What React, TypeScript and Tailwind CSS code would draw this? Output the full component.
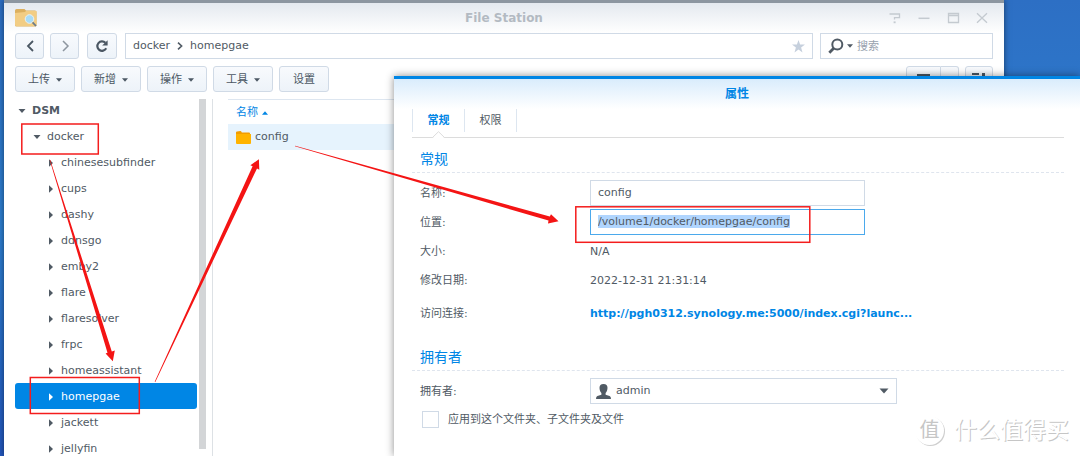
import { useEffect, useRef } from 'react'

const menus = ['上传', '新增', '操作', '工具']

const folders = [
  'chinesesubfinder',
  'cups',
  'dashy',
  'ddnsgo',
  'emby2',
  'flare',
  'flaresolver',
  'frpc',
  'homeassistant',
  'homepgae',
  'jackett',
  'jellyfin',
]

const btn = 'h-[26px] flex items-center justify-center border border-[#d0dae6] rounded-[3px] bg-linear-to-b from-[#f8fafd] to-[#edf3f9] text-[#4b5763]'

function Caret({ className = '' }: { className?: string }) {
  return (
    <svg className={`shrink-0 ${className}`} width="6" height="4" viewBox="0 0 6 4" fill="currentColor">
      <path d="M0 0.3h6L3 3.7z" />
    </svg>
  )
}

function TreeArrow({ open }: { open?: boolean }) {
  return (
    <svg className="shrink-0" width="8" height="8" viewBox="0 0 8 8" fill="currentColor">
      <path d={open ? 'M0.5 2h7L4 6z' : 'M2 0.2v7.6L6 4z'} />
    </svg>
  )
}

function AppIcon() {
  return (
    <svg width="22" height="18" viewBox="0 0 22 18">
      <path d="M0 1.5Q0 0 1.5 0h8L11 1.5h9q1.5 0 1.5 1.5v13q0 1.500-1.500 1.500h-18.500Q0 17.500 0 16z" fill="#dcb05f" />
      <path d="M0 4l10-1 1-1h10.500v13.500q0 1.500-1.500 1.500H1.500Q0 17 0 15.500z" fill="#f2cd84" />
      <circle cx="14.500" cy="10" r="4.300" fill="#a9dcf7" stroke="#e9f2f5" />
      <path d="M17.600 13.300l3.400 3.700" stroke="#6b7c89" strokeWidth="1.800" />
    </svg>
  )
}

function TitleBar() {
  return (
    <header className="relative h-[30px] flex items-center justify-between pl-[11px] pr-[14px] bg-linear-to-b from-[#e4e9ef] to-white">
      <div>
        <AppIcon />
      </div>
      <h1 className="absolute inset-x-0 text-center text-[12px] font-bold text-[#b3bac2] pointer-events-none">File Station</h1>
      <div className="flex gap-[13px] text-[#c4cad0]">
        <button type="button" aria-label="帮助">
          <svg width="16" height="12" viewBox="0 0 16 12" fill="none" stroke="currentColor" strokeWidth="1.3">
            <path d="M2.500 2h10v3.600H7.500v2" />
            <path d="M6.600 10.300h2" strokeWidth="1.800" />
          </svg>
        </button>
        <button type="button" aria-label="最小化">
          <svg width="16" height="12" viewBox="0 0 16 12" stroke="currentColor" strokeWidth="1.500">
            <path d="M2.500 6.300h11" />
          </svg>
        </button>
        <button type="button" aria-label="最大化">
          <svg width="16" height="12" viewBox="0 0 16 12" fill="none" stroke="currentColor">
            <path d="M3.500 1.500h10v9h-10zM3.500 3.500h10" strokeWidth="1.300" />
          </svg>
        </button>
        <button type="button" aria-label="关闭">
          <svg width="16" height="12" viewBox="0 0 16 12" stroke="currentColor" strokeWidth="1.300">
            <path d="M3 1.200l10 9.600M13 1.200L3 10.800" />
          </svg>
        </button>
      </div>
    </header>
  )
}

function NavRow() {
  return (
    <div className="flex px-[11px]">
      <button type="button" aria-label="后退" className={`${btn} w-[29px]`}>
        <svg width="10" height="12" viewBox="0 0 10 12" fill="none" stroke="currentColor" strokeWidth="1.8">
          <path d="M8 1L3 6l5 5" />
        </svg>
      </button>
      <button type="button" aria-label="前进" className={`${btn} w-[29px] ml-1.5`}>
        <svg className="opacity-60" width="10" height="12" viewBox="0 0 10 12" fill="none" stroke="currentColor" strokeWidth="1.5">
          <path d="M3 1l5 5-5 5" />
        </svg>
      </button>
      <button type="button" aria-label="刷新" className={`${btn} w-[30px] ml-2`}>
        <svg width="14" height="14" viewBox="0 0 14 14">
          <path d="M11.200 9.300A4.700 4.700 0 1 1 10.400 3.800" fill="none" stroke="currentColor" strokeWidth="2.200" />
          <path d="M12.600 1.200v5.400H7.200z" fill="currentColor" />
        </svg>
      </button>
      <nav className="flex-1 ml-2 h-[26px] flex items-center gap-[7px] border border-[#d0dae6] px-[7px] bg-white">
        <a href="#docker">docker</a>
        <svg width="6" height="8" viewBox="0 0 6 8" fill="none" stroke="currentColor" strokeWidth="1.6">
          <path d="M1 0.700L4.600 4 1 7.300" />
        </svg>
        <a href="#homepgae">homepgae</a>
        <button type="button" aria-label="收藏" className="ml-auto text-[#c6d0dd]">
          <svg width="13" height="13" viewBox="0 0 13 13" fill="currentColor">
            <path d="M6.500 0l1.600 4.600H13L9.100 7.600l1.400 4.900-4-2.900-4 2.900 1.400-4.900L0 4.600h4.900z" />
          </svg>
        </button>
      </nav>
      <label className="w-[173px] ml-[7px] h-[26px] flex items-center border border-[#d0dae6] px-[7px] bg-white">
        <svg width="16" height="16" viewBox="0 0 16 16" fill="none" stroke="currentColor">
          <circle cx="9.300" cy="6.500" r="5" strokeWidth="2" />
          <path d="M5.700 10.300L1.300 14.700" strokeWidth="2.800" />
        </svg>
        <Caret className="ml-[3px]" />
        <input type="search" aria-label="搜索" placeholder="搜索" className="flex-1 min-w-0 ml-1 pt-px outline-none placeholder:text-[#98a2ae]" />
      </label>
    </div>
  )
}

function Toolbar() {
  return (
    <div className="flex gap-1.5 px-[11px] mt-[7px]">
      {menus.map(m => (
        <button key={m} type="button" className={`${btn} w-[60px] gap-1.5 pt-px`}>
          {m}
          <Caret />
        </button>
      ))}
      <button type="button" className={`${btn} w-[50px] pt-px`}>设置</button>
      <div className="flex ml-auto">
        <button type="button" aria-label="列表视图" className={`${btn} w-[35px] rounded-r-none`}>
          <svg width="13" height="12" viewBox="0 0 13 12" fill="currentColor">
            <path d="M0 1h13v2H0zM0 5h13v2H0zM0 9h13v2H0z" />
          </svg>
        </button>
        <button type="button" aria-label="视图选项" className={`${btn} w-[18px] rounded-l-none border-l-0`}>
          <Caret />
        </button>
      </div>
      <button type="button" aria-label="排序" className={`${btn} w-[28px]`}>
        <svg width="14" height="14" viewBox="0 0 14 14" fill="currentColor">
          <path d="M0 1h7v2H0zM0 5h5v2H0zM0 9h3v2H0zM10 1h3v8h1.500L11.500 13 8.500 9H10z" />
        </svg>
      </button>
    </div>
  )
}

function FolderTree() {
  const row = 'w-full h-[26px] flex items-center gap-1.5 rounded-[3px] pt-0.5'
  return (
    <aside className="w-[209px] shrink-0 flex border-r border-[#dde1e5] pl-[11px]">
      <ul className="w-[182px] -mt-0.5">
        <li>
          <button type="button" className={`${row} pl-[3px] font-bold`}>
            <TreeArrow open />
            DSM
          </button>
          <ul>
            <li>
              <button type="button" className={`${row} pl-[18px]`}>
                <TreeArrow open />
                docker
              </button>
              <ul>
                {folders.map(name => (
                  <li key={name}>
                    <button type="button" className={`${row} pl-8 ${name === 'homepgae' ? 'bg-[#0086e5] text-white' : ''}`}>
                      <TreeArrow />
                      {name}
                    </button>
                  </li>
                ))}
              </ul>
            </li>
          </ul>
        </li>
      </ul>
      {/* scrollbar thumb */}
      <div className="w-[7px] h-[350px] ml-0.5 bg-[#d3d5d7]" />
    </aside>
  )
}

function FileList() {
  return (
    <table className="flex-1 ml-[15px] block">
      <thead className="block">
        <tr className="block border-t border-[#dde6f0]">
          <th className="h-6 flex items-center gap-1 pl-2 pt-0.5 font-normal text-[#0086e5]">
            名称
            <Caret className="rotate-180" />
          </th>
        </tr>
      </thead>
      <tbody className="block">
        <tr className="block bg-[#e6f3fd]">
          <td className="h-[26px] flex items-center gap-1 pl-2">
            <svg width="15" height="13" viewBox="0 0 15 13">
              <path d="M0 1.500Q0 .5 1 .5L4.500 0q1 0 1.300 1.500H13q1 0 1 1V4H0z" fill="#f29c00" />
              <path d="M0 3h15v9q0 1-1 1H1q-1 0-1-1z" fill="#ffb300" />
            </svg>
            config
          </td>
        </tr>
      </tbody>
    </table>
  )
}

function SectionTitle({ children }: { children: string }) {
  return <h3 className="h-7 pl-2 flex items-center text-[14px] text-[#0086e5] border-b border-dashed border-[#dfe5ee]">{children}</h3>
}

const field = 'flex items-center h-[29px] pl-2'
const box = 'h-[26px] border border-[#d0dae6] bg-white outline-none'

function PropertiesDialog() {
  const pathRef = useRef<HTMLInputElement>(null)

  useEffect(() => {
    pathRef.current?.focus()
    pathRef.current?.select()
  }, [])

  return (
    <section role="dialog" aria-labelledby="dialog-title" className="absolute left-[394px] right-0 top-[76px] bottom-0 bg-white border-t-[3px] border-[#0086e5] shadow-[0_0_8px_rgba(0,0,0,0.45)]">
      <div className="h-[30px] flex items-center justify-center bg-linear-to-b from-[#d9ecfc] to-white">
        <h2 id="dialog-title" className="text-[12px] font-bold text-[#0086e5]">属性</h2>
      </div>
      <div className="pl-[18px] pr-4">
        <div role="tablist" className="relative flex h-[29px] border-b border-[#dcdcdc]">
          <button type="button" role="tab" aria-selected="true" className="w-[53px] h-[23px] border-x border-[#dde6f0] font-bold text-[#0086e5]">
            常规
          </button>
          <button type="button" role="tab" aria-selected="false" className="w-[52px] h-[23px] border-r border-[#dde6f0]">
            权限
          </button>
          {/* notch under the active tab */}
          <svg className="absolute left-5 -bottom-px" width="13" height="7" viewBox="0 0 13 7">
            <path d="M0.500 6.500L6.500 0.700 12.500 6.500" fill="#fff" stroke="#dcdcdc" />
            <path d="M1.500 6.500h10" stroke="#fff" />
          </svg>
        </div>
        <form className="pt-[7px]">
          <SectionTitle>常规</SectionTitle>
          <div className="pt-[5px]">
            <div className={field}>
              <label htmlFor="name" className="w-[170px] pt-0.5">名称:</label>
              <input id="name" defaultValue="config" className={`${box} w-[275px] px-[7px]`} />
            </div>
            <div className={field}>
              <label htmlFor="path" className="w-[170px] pt-0.5">位置:</label>
              <input
                id="path"
                ref={pathRef}
                readOnly
                defaultValue="/volume1/docker/homepgae/config"
                className="h-[26px] w-[275px] px-[7px] bg-white outline-none border border-[#4ba9ec] selection:bg-[#b0d5fe] selection:text-[#505a64]"
              />
            </div>
            <div className={`${field} pt-0.5`}>
              <span className="w-[170px]">大小:</span>
              <span>N/A</span>
            </div>
            <div className={`${field} pt-0.5`}>
              <span className="w-[170px]">修改日期:</span>
              <span>2022-12-31 21:31:14</span>
            </div>
            <div className="flex items-center h-[37px] pl-2 pt-0.5">
              <span className="w-[170px]">访问连接:</span>
              <a href="http://pgh0312.synology.me:5000/index.cgi" className="font-bold text-[#0086e5]">http://pgh0312.synology.me:5000/index.cgi?launc...</a>
            </div>
          </div>
          <div className="pt-3">
            <SectionTitle>拥有者</SectionTitle>
          </div>
          <div className="flex items-center pl-2 pt-[7px]">
            <label htmlFor="owner" className="w-[170px] pt-0.5">拥有者:</label>
            <div className="relative w-[307px]">
              <select id="owner" className={`${box} w-full appearance-none pl-[25px]`}>
                <option>admin</option>
              </select>
              <svg className="absolute left-1.5 top-[6px]" width="15" height="15" viewBox="0 0 15 15" fill="currentColor">
                <path d="M7.500 0C10.300 0 11.500 1.400 11.500 3.800c0 2.200-.7 4-1.900 5.200v1.700l4 1.300q1.400.5 1.400 3H0q0-2.500 1.400-3l4-1.300V9C4.200 7.800 3.500 6 3.500 3.800 3.500 1.400 4.700 0 7.500 0z" />
              </svg>
              <svg className="absolute right-2 top-[10px]" width="10" height="6" viewBox="0 0 10 6" fill="currentColor">
                <path d="M0.500 0.500h9L5 5.500z" />
              </svg>
            </div>
          </div>
          <label className="flex items-center gap-[9px] pl-[10px] pt-[7px]">
            <input type="checkbox" className="appearance-none size-[17px] border border-[#d0dae6] bg-white" />
            应用到这个文件夹、子文件夹及文件
          </label>
        </form>
      </div>
    </section>
  )
}

// red callouts drawn over the windows
function Annotations() {
  return (
    <svg className="absolute left-0 top-0 pointer-events-none" width="1080" height="456" viewBox="0 0 1080 456">
      <g fill="none" stroke="#f41d1d" strokeWidth="1.5">
        <rect x="21.800" y="124" width="76.500" height="30" />
        <rect x="30.300" y="377.500" width="109" height="36" />
        <rect x="575.800" y="206.800" width="234" height="35.500" />
      </g>
      <g fill="#f41414">
        <path d="M49.700 160.100L50.300 159.900 111.800 351.600 114.800 350.500 112.800 361.300 105.600 353.600 107.500 352.800z" />
        <path d="M154.700 381.800L155.300 382.100 257 168.400 259.300 169.800 258.900 159.300 250.400 165.300 252.600 166.300z" />
        <path d="M295.100 145.700L294.900 146.300 548.500 220.600 548 223.600 558.500 221.200 551 214.200 549.800 216.500z" />
      </g>
    </svg>
  )
}

function Watermark() {
  return (
    <div className="absolute right-[11px] bottom-[10px] flex items-center gap-2.5 text-white pointer-events-none [text-shadow:1px_1px_0_#c6c6c6]">
      <span className="size-[29px] rounded-full flex items-center justify-center text-[20px] text-[#c6c6c6] [text-shadow:none] shadow-[1px_1px_0_#cfcfcf]">值</span>
      <span className="text-[23px] leading-8">什么值得买</span>
    </div>
  )
}

export default function App() {
  return (
    <div className="relative h-screen overflow-hidden bg-linear-to-b from-[#2d6fc4] via-[#2d7fd0] to-[#2357bd] text-[11px] leading-4 text-[#505a64] font-['DejaVu_Sans','Noto_Sans_CJK_SC',sans-serif]">
      <main className="h-full ml-1 mr-[76px] flex flex-col bg-white border-t-[3px] border-[#8c96a0] shadow-[0_0_6px_rgba(0,0,0,0.5)]">
        <TitleBar />
        <NavRow />
        <Toolbar />
        <div className="flex-1 min-h-0 flex mt-[7px]">
          <FolderTree />
          <FileList />
        </div>
      </main>
      <PropertiesDialog />
      <Annotations />
      <Watermark />
    </div>
  )
}
